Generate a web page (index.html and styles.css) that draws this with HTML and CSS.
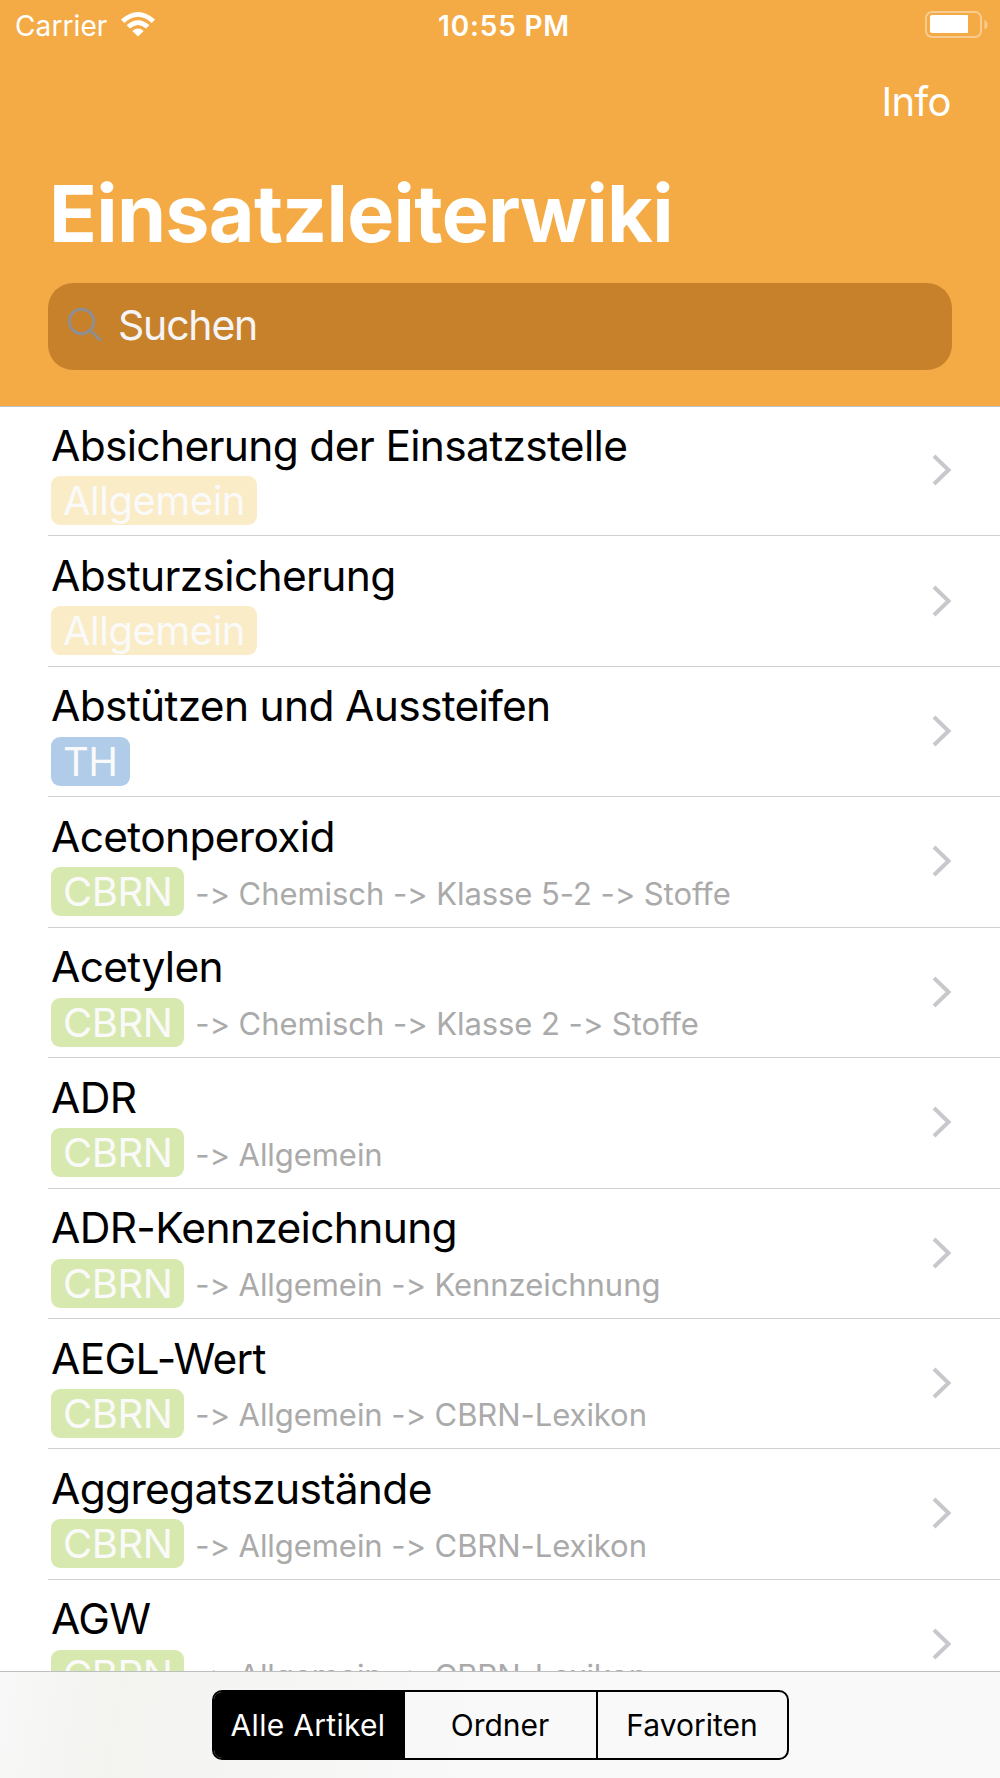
FILE: index.html
```html
<!DOCTYPE html>
<html lang="de">
<head>
    <meta charset="utf-8">
    <title>Einsatzleiterwiki</title>
    <link rel="stylesheet" href="styles.css">
</head>
<body>
    <header class="header">
        <div class="statusbar">
            <div class="carrier">
                <span>Carrier</span>
                <svg class="wifi" width="34" height="25" viewBox="0 0 34 25">
                    <path d="M0 7.6 Q17 -7.4 34 7.6 L30.7 10.9 Q17 -1.4 3.3 10.9 Z"/>
                    <path d="M5.6 13.2 Q17 3.2 28.4 13.2 L25 16.6 Q17 9.6 9 16.6 Z"/>
                    <path d="M11.3 18.9 Q17 14 22.7 18.9 L17 24.6 Z"/>
                </svg>
            </div>
            <div class="time">10:55 PM</div>
            <svg class="battery" width="64" height="28" viewBox="0 0 64 28">
                <rect class="battery-frame" x="1" y="1" width="55" height="25" rx="6"/>
                <path class="battery-tip" d="M59.5 9 Q62.6 10.5 62.6 13.7 Q62.6 17 59.5 18.5 Z"/>
                <rect x="5" y="4" width="38" height="18" rx="2"/>
                <rect x="36" y="4" width="7" height="18"/>
            </svg>
        </div>
        <div class="navbar"><a class="info">Info</a></div>
        <h1>Einsatzleiterwiki</h1>
        <div class="search">
            <svg width="36" height="36" viewBox="0 0 36 36">
                <circle cx="14.5" cy="14.5" r="12.2"/>
                <path d="M23.3 23.3 L33 32.8"/>
            </svg>
            <span>Suchen</span>
        </div>
    </header>
    <ul class="list">
        <li>
            <div class="article">
                <h2>Absicherung der Einsatzstelle</h2>
                <div class="meta"><span class="tag allgemein">Allgemein</span></div>
            </div>
            <svg class="chevron" viewBox="0 0 20 32"><path d="M2 2 L16.5 16 L2 30"/></svg>
        </li>
        <li>
            <div class="article">
                <h2>Absturzsicherung</h2>
                <div class="meta"><span class="tag allgemein">Allgemein</span></div>
            </div>
            <svg class="chevron" viewBox="0 0 20 32"><path d="M2 2 L16.5 16 L2 30"/></svg>
        </li>
        <li>
            <div class="article">
                <h2>Abstützen und Aussteifen</h2>
                <div class="meta"><span class="tag th">TH</span></div>
            </div>
            <svg class="chevron" viewBox="0 0 20 32"><path d="M2 2 L16.5 16 L2 30"/></svg>
        </li>
        <li>
            <div class="article">
                <h2>Acetonperoxid</h2>
                <div class="meta"><span class="tag cbrn">CBRN</span><span class="path">-&gt; Chemisch -&gt; Klasse 5-2 -&gt; Stoffe</span></div>
            </div>
            <svg class="chevron" viewBox="0 0 20 32"><path d="M2 2 L16.5 16 L2 30"/></svg>
        </li>
        <li>
            <div class="article">
                <h2>Acetylen</h2>
                <div class="meta"><span class="tag cbrn">CBRN</span><span class="path">-&gt; Chemisch -&gt; Klasse 2 -&gt; Stoffe</span></div>
            </div>
            <svg class="chevron" viewBox="0 0 20 32"><path d="M2 2 L16.5 16 L2 30"/></svg>
        </li>
        <li>
            <div class="article">
                <h2>ADR</h2>
                <div class="meta"><span class="tag cbrn">CBRN</span><span class="path">-&gt; Allgemein</span></div>
            </div>
            <svg class="chevron" viewBox="0 0 20 32"><path d="M2 2 L16.5 16 L2 30"/></svg>
        </li>
        <li>
            <div class="article">
                <h2>ADR-Kennzeichnung</h2>
                <div class="meta"><span class="tag cbrn">CBRN</span><span class="path">-&gt; Allgemein -&gt; Kennzeichnung</span></div>
            </div>
            <svg class="chevron" viewBox="0 0 20 32"><path d="M2 2 L16.5 16 L2 30"/></svg>
        </li>
        <li>
            <div class="article">
                <h2>AEGL-Wert</h2>
                <div class="meta"><span class="tag cbrn">CBRN</span><span class="path">-&gt; Allgemein -&gt; CBRN-Lexikon</span></div>
            </div>
            <svg class="chevron" viewBox="0 0 20 32"><path d="M2 2 L16.5 16 L2 30"/></svg>
        </li>
        <li>
            <div class="article">
                <h2>Aggregatszustände</h2>
                <div class="meta"><span class="tag cbrn">CBRN</span><span class="path">-&gt; Allgemein -&gt; CBRN-Lexikon</span></div>
            </div>
            <svg class="chevron" viewBox="0 0 20 32"><path d="M2 2 L16.5 16 L2 30"/></svg>
        </li>
        <li>
            <div class="article">
                <h2>AGW</h2>
                <div class="meta"><span class="tag cbrn">CBRN</span><span class="path">-&gt; Allgemein -&gt; CBRN-Lexikon</span></div>
            </div>
            <svg class="chevron" viewBox="0 0 20 32"><path d="M2 2 L16.5 16 L2 30"/></svg>
        </li>
    </ul>
    <footer class="toolbar">
        <div class="segments">
            <div class="segment active">Alle Artikel</div>
            <div class="segment">Ordner</div>
            <div class="segment">Favoriten</div>
        </div>
    </footer>
</body>
</html>
```
FILE: styles.css
```css
* {
    box-sizing: border-box;
}
body {
    display: flex;
    flex-direction: column;
    width: 1000px;
    height: 1778px;
    margin: 0;
    overflow: hidden;
    background-color: white;
    font-family: Inter, "Liberation Sans", sans-serif;
    font-optical-sizing: none;
    font-variant-ligatures: none;
    font-feature-settings: "calt" 0;
}
.header {
    flex: none;
    height: 406px;
    background-color: #f4ab46;
    box-shadow: 0 1px 0 #bfc2c6;
    color: white;
}
.statusbar {
    display: grid;
    grid-template-columns: 1fr auto 1fr;
    height: 50px;
    padding: 0 9px 0 15px;
    font-size: 28px;
    line-height: 52px;
}
.carrier {
    display: flex;
    gap: 14px;
    letter-spacing: 0.1px;
}
.wifi {
    margin-top: 12px;
    fill: white;
}
.time {
    padding-left: 2px;
    font-weight: 600;
    letter-spacing: 0.8px;
}
.battery {
    justify-self: end;
    margin: 11px 2px 0 0;
    fill: white;
}
.battery .battery-frame {
    fill: none;
    stroke: white;
    stroke-width: 2;
    opacity: 0.4;
}
.battery .battery-tip {
    opacity: 0.4;
}
.navbar {
    display: flex;
    justify-content: flex-end;
    height: 104px;
    padding: 22px 49px 0 0;
}
.info {
    font-size: 40px;
    letter-spacing: -0.6px;
    line-height: 60px;
}
h1 {
    margin: 0;
    padding-left: 49px;
    font-size: 79px;
    font-weight: 700;
    letter-spacing: -0.75px;
    line-height: 118px;
}
.search {
    display: flex;
    align-items: center;
    gap: 15px;
    height: 87px;
    margin: 11px 48px 0;
    padding: 0 0 3px 19px;
    border-radius: 25px;
    background-color: #c8812b;
    color: #f5f5f7;
    font-size: 41px;
    letter-spacing: -1.2px;
}
.search svg {
    fill: none;
    stroke: #8e8e93;
    stroke-width: 3;
    stroke-linecap: round;
}
.list {
    flex: 1;
    min-height: 0;
    margin: 0;
    padding: 0 0 0 48px;
    overflow: hidden;
    list-style: none;
}
.list li {
    display: flex;
    justify-content: space-between;
    height: 130.43px;
    padding: 14.6px 48px 0 3px;
    border-bottom: 1px solid #d0d0d2;
}
h2 {
    margin: 0 0 5.4px;
    font-size: 42.5px;
    font-weight: 400;
    letter-spacing: -0.68px;
    line-height: 50px;
}
.meta {
    display: flex;
    gap: 11px;
    height: 49px;
    line-height: 49px;
}
.tag {
    padding: 0 12px;
    border-radius: 9px;
    color: #fafafa;
    font-size: 40px;
    letter-spacing: -0.5px;
}
.allgemein {
    background-color: #faecc6;
}
.th {
    background-color: #b1cce9;
}
.cbrn {
    background-color: #d8e9b0;
}
.path {
    padding-top: 1.5px;
    color: #aaa;
    font-size: 31px;
    letter-spacing: -0.06px;
}
.chevron {
    width: 20px;
    height: 32px;
    margin-top: 33.5px;
    fill: none;
    stroke: #c7c7cc;
    stroke-width: 4;
}
.toolbar {
    flex: none;
    display: flex;
    justify-content: center;
    height: 107px;
    padding-top: 18px;
    border-top: 1px solid #bfbfbf;
    background: linear-gradient(100deg, #f8f8f8 0%, #f3f4f0 12%, #f5f5f4 25%, #f9f9f9 50%);
}
.segments {
    display: grid;
    grid-template-columns: 1fr 1fr 1fr;
    width: 577px;
    height: 70px;
    border: 2px solid black;
    border-radius: 10px;
    overflow: hidden;
}
.segment {
    font-size: 30px;
    line-height: 66px;
    text-align: center;
}
.segment:last-child {
    border-left: 2px solid black;
}
.segment.active {
    padding-right: 2px;
    background-color: black;
    color: white;
    letter-spacing: 0.3px;
}
```
